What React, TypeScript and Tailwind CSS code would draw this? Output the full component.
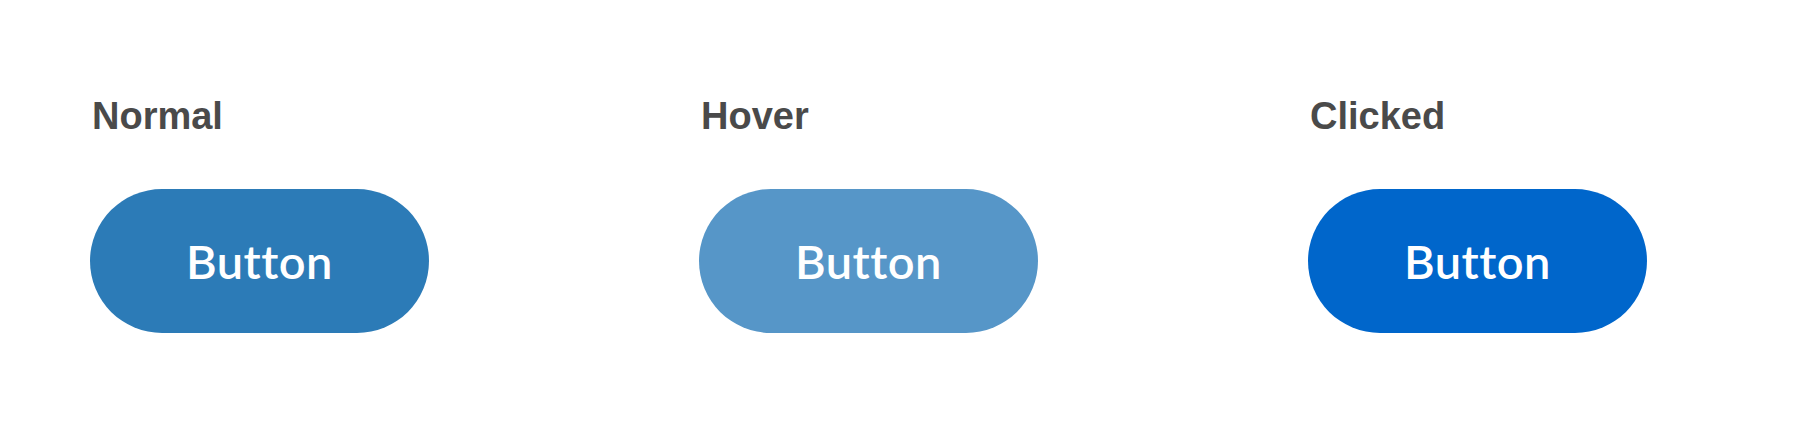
const states = [
  { label: "Normal", color: "bg-[#2c7bb7]" },
  { label: "Hover", color: "bg-[#5696c8]" },
  { label: "Clicked", color: "bg-[#0066cb]" },
];

export default function App() {
  return (
    <div className="w-[1800px] h-[423px] bg-white pl-[90px] pt-[97px] flex gap-[270px]">
      {states.map((s) => (
        <div key={s.label} className="flex flex-col w-[339px]">
          <h2 className="font-['Liberation_Sans',Arial,sans-serif] font-bold text-[38px] leading-none text-[#4a4a4a] pl-[2px]">
            {s.label}
          </h2>
          <button
            className={`${s.color} mt-[54px] h-[144px] w-[339px] rounded-full text-white font-['Lato',sans-serif] font-semibold text-[47px] tracking-[0.5px] leading-none flex items-center justify-center`}
          >
            Button
          </button>
        </div>
      ))}
    </div>
  );
}
